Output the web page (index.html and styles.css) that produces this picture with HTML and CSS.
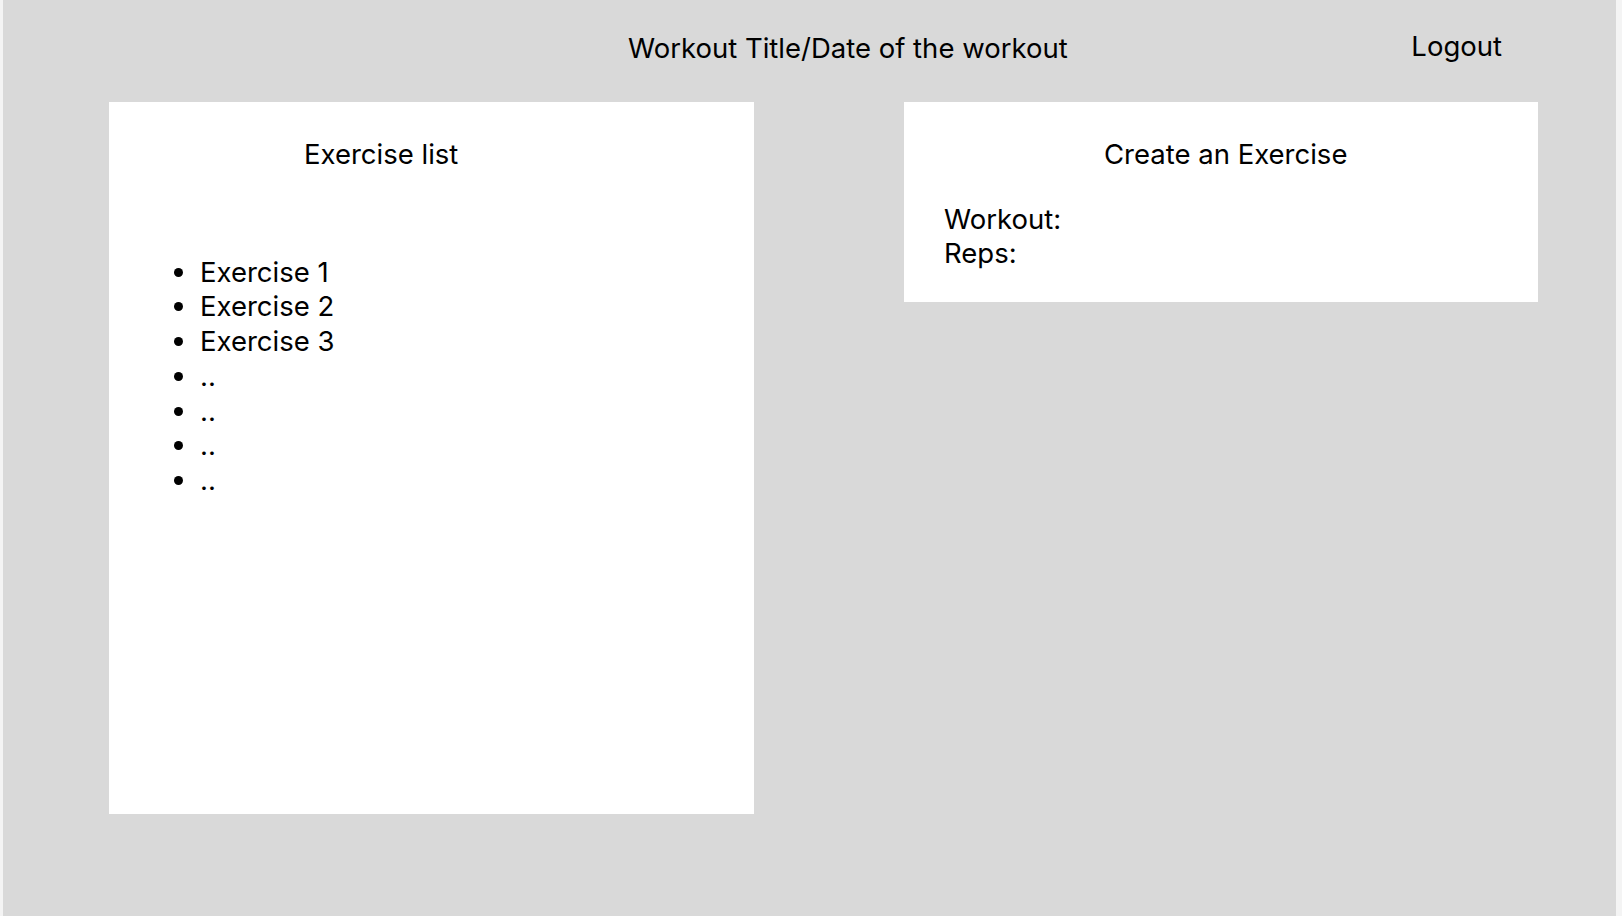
FILE: index.html
```html
<!DOCTYPE html>
<html lang="en">
<head>
<meta charset="utf-8">
<title>Workout</title>
<link rel="stylesheet" href="styles.css">
</head>
<body>
<div class="frame">
  <header class="topbar">
    <div class="title">Workout Title/Date of the workout</div>
    <div class="logout">Logout</div>
  </header>
  <main class="content">
    <section class="card list-card">
      <h2 class="list-heading">Exercise list</h2>
      <ul class="exercise-list">
        <li>Exercise 1</li>
        <li>Exercise 2</li>
        <li>Exercise 3</li>
        <li>..</li>
        <li>..</li>
        <li>..</li>
        <li>..</li>
      </ul>
    </section>
    <section class="card create-card">
      <h2 class="create-heading">Create an Exercise</h2>
      <div class="fields">
        <div class="field">Workout:</div>
        <div class="field">Reps:</div>
      </div>
    </section>
  </main>
</div>
</body>
</html>
```

FILE: styles.css
```css
html, body {
  margin: 0;
  padding: 0;
}
body {
  background: #f4f4f4;
  font-family: Inter, "Noto Sans", "Liberation Sans", sans-serif;
  font-size: 27.5px;
  line-height: 34.7px;
  color: #000;
}
.frame {
  margin-left: 3px;
  width: 1613px;
  height: 916px;
  background: #d9d9d9;
  overflow: hidden;
}
.topbar {
  display: flex;
  align-items: flex-start;
  height: 102px;
  box-sizing: border-box;
  padding: 31px 114px 0 625px;
}
.title {
  white-space: nowrap;
}
.logout {
  margin-left: auto;
  margin-top: -2px;
}
.content {
  display: flex;
  align-items: flex-start;
  gap: 150px;
  padding-left: 106px;
}
.card {
  background: #fff;
  box-sizing: border-box;
}
.list-card {
  width: 645px;
  height: 712px;
  padding-top: 35px;
}
.create-card {
  width: 634px;
  height: 200px;
  padding-top: 35px;
}
h2 {
  margin: 0;
  font-size: 27.5px;
  font-weight: 400;
  line-height: 34.7px;
}
.list-heading {
  padding-left: 195px;
}
.exercise-list {
  list-style: none;
  margin: 83px 0 0 0;
  padding: 0 0 0 91px;
}
.exercise-list li {
  position: relative;
}
.exercise-list li::before {
  content: "";
  position: absolute;
  left: -26px;
  top: 13px;
  width: 9px;
  height: 9px;
  border-radius: 50%;
  background: #000;
}
.create-heading {
  padding-left: 200px;
}
.fields {
  margin-top: 30px;
  padding-left: 40px;
}
```
